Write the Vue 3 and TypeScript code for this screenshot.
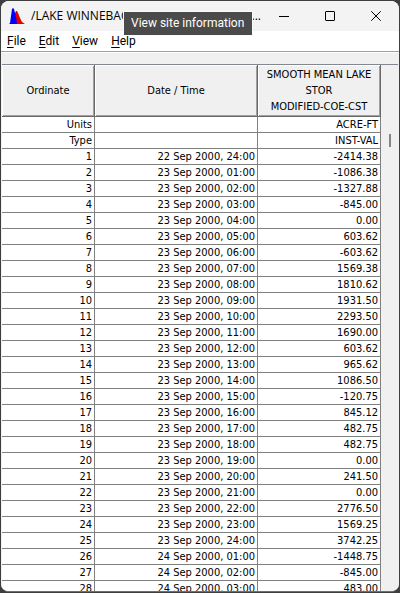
<script setup lang="ts">
interface Row {
  label: string
  time: string
  value: string
}

const menus: string[] = ['File', 'Edit', 'View', 'Help']

const values: string[] = [
  '-2414.38', '-1086.38', '-1327.88', '-845.00', '0.00', '603.62', '-603.62',
  '1569.38', '1810.62', '1931.50', '2293.50', '1690.00', '603.62', '965.62',
  '1086.50', '-120.75', '845.12', '482.75', '482.75', '0.00', '241.50', '0.00',
  '2776.50', '1569.25', '3742.25', '-1448.75', '-845.00', '483.00',
]

// The series starts at 22 Sep 2000, 24:00; midnight belongs to the day it ends.
function timeLabel(index: number): string {
  const day = 22 + Math.ceil(index / 24)
  const hour = index % 24 === 0 ? 24 : index % 24
  return `${day} Sep 2000, ${String(hour).padStart(2, '0')}:00`
}

const rows: Row[] = [
  { label: 'Units', time: '', value: 'ACRE-FT' },
  { label: 'Type', time: '', value: 'INST-VAL' },
  ...values.map((value, i) => ({ label: String(i + 1), time: timeLabel(i), value })),
]
</script>

<template>
  <div class="desktop">
    <main class="window">
      <header class="titlebar">
        <svg class="logo" viewBox="0 0 16 16" aria-hidden="true">
          <path d="M5 16 L6 5 L7 3 L8 3 L9 5 L11 10 L13 14 L16 16 Z" fill="#e00000" />
          <path d="M0 16 L1 15 L2 8 L3 1 L4 0 L5 1 L6 5 L7 9 L8 16 Z" fill="#0000ff" />
        </svg>
        <h1 class="title"><span class="name">/LAKE WINNEBAG</span><span>...</span></h1>
        <div class="tooltip" role="tooltip">View site information</div>
        <div class="controls">
          <button type="button" aria-label="Minimize">
            <svg viewBox="0 0 10 10"><path d="M0 5.5H10" /></svg>
          </button>
          <button type="button" aria-label="Maximize">
            <svg viewBox="0 0 10 10"><rect x="0.5" y="0.5" width="9" height="9" rx="0.5" /></svg>
          </button>
          <button type="button" aria-label="Close">
            <svg viewBox="0 0 10 10"><path d="M0.3 0.3L9.7 9.7M9.7 0.3L0.3 9.7" /></svg>
          </button>
        </div>
      </header>

      <nav class="menubar">
        <button v-for="menu in menus" :key="menu" type="button"><u>{{ menu[0] }}</u>{{ menu.slice(1) }}</button>
      </nav>

      <section class="content">
        <div class="sheet">
          <table>
            <colgroup>
              <col class="col-ordinate">
              <col class="col-time">
              <col>
            </colgroup>
            <thead>
              <tr>
                <th scope="col">Ordinate</th>
                <th scope="col">Date / Time</th>
                <th scope="col">SMOOTH MEAN LAKE<br>STOR<br>MODIFIED-COE-CST</th>
              </tr>
            </thead>
            <tbody>
              <tr v-for="row in rows" :key="row.label">
                <td>{{ row.label }}</td>
                <td>{{ row.time }}</td>
                <td>{{ row.value }}</td>
              </tr>
            </tbody>
          </table>
        </div>
        <div class="scrollbar"><div class="thumb"></div></div>
      </section>
    </main>
  </div>
</template>

<style>
body {
  background: #3c3e40;
}
</style>

<style scoped>
.desktop {
  box-sizing: border-box;
  height: 100vh;
  padding: 1px;
  background: #3c3e40;
}

.window {
  box-sizing: border-box;
  display: flex;
  flex-direction: column;
  height: 100%;
  overflow: hidden;
  border-bottom: 1px solid #6c6e70;
  border-radius: 8px;
  background: #fff;
  color: #000;
  font-family: "DejaVu Sans Condensed", "DejaVu Sans", sans-serif;
  font-size: 11px;
}

button {
  margin: 0;
  padding: 0;
  border: 0;
  background: none;
  color: inherit;
  font: inherit;
}

.titlebar {
  position: relative;
  display: flex;
  flex: none;
  align-items: center;
  height: 30px;
  padding-left: 8px;
  background: #f3f3f3;
}

.logo {
  width: 16px;
  height: 16px;
}

.title {
  display: flex;
  flex: 1;
  min-width: 0;
  margin: 0;
  padding-left: 6px;
  font-family: "Open Sans", "Noto Sans", sans-serif;
  font-size: 12px;
  font-weight: 400;
  line-height: 16px;
  white-space: nowrap;
}

.name {
  flex: 1;
  min-width: 0;
  overflow: hidden;
}

.tooltip {
  position: absolute;
  top: 11px;
  left: 123px;
  padding: 0 8px 0 7px;
  background: #4b4b4b;
  box-shadow: 0 0 0 1px #fafafa;
  color: #fff;
  font-family: Roboto, sans-serif;
  font-size: 12px;
  line-height: 23px;
  white-space: nowrap;
}

.controls {
  display: flex;
}

.controls button {
  display: flex;
  align-items: center;
  justify-content: center;
  width: 46px;
  height: 30px;
}

.controls svg {
  width: 10px;
  height: 10px;
  fill: none;
  stroke: #000;
}

.menubar {
  display: flex;
  flex: none;
  gap: 13px;
  height: 20px;
  padding-left: 6px;
  border-bottom: 1px solid #a0a0a0;
  font-family: Roboto, sans-serif;
  font-size: 12px;
}

.menubar u {
  text-underline-offset: 2px;
}

.content {
  display: flex;
  flex: 1;
  min-height: 0;
  padding: 11px 1px 0 1px;
  border-top: 1px solid #fff;
  background: #f0f0f0;
}

.sheet {
  flex: 1;
  min-width: 0;
  overflow: hidden;
  border-top: 1px solid #828790;
}

table {
  width: 100%;
  border-collapse: separate;
  border-spacing: 0;
  table-layout: fixed;
  background: #fff;
}

.col-ordinate {
  width: 93px;
}

.col-time {
  width: 163px;
}

th,
td {
  box-sizing: border-box;
  border-right: 1px solid #808080;
  border-bottom: 1px solid #808080;
  font-weight: 400;
}

th {
  height: 52px;
  padding: 0;
  border-color: #696969;
  background: #f0f0f0;
  box-shadow: inset 1px 1px #fff, inset -1px -1px #a0a0a0;
  line-height: 16px;
  text-align: center;
}

td {
  height: 16px;
  padding: 0 2px;
  line-height: 15px;
  text-align: right;
  white-space: nowrap;
}

.scrollbar {
  flex: none;
  width: 17px;
  border-top: 1px solid #828790;
}

.thumb {
  width: 2px;
  height: 13px;
  margin: 69px 0 0 8px;
  background: #858585;
}
</style>
